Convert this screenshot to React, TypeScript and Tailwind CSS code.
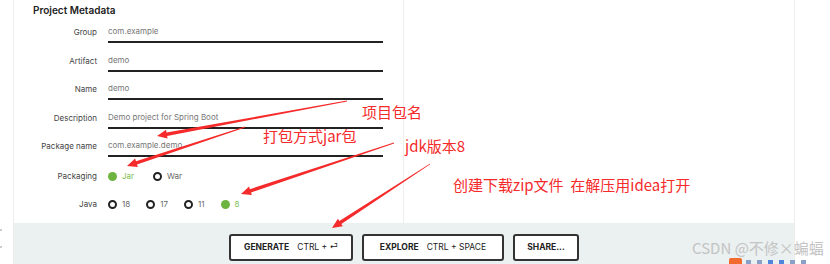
import React from "react";

const RED = "#f52a2a";

function arrowPoints(x1: number, y1: number, x2: number, y2: number) {
  const dx = x2 - x1;
  const dy = y2 - y1;
  const len = Math.sqrt(dx * dx + dy * dy);
  const ux = dx / len;
  const uy = dy / len;
  const nx = -uy;
  const ny = ux;
  const h = 10;
  const bx = x2 - ux * h;
  const by = y2 - uy * h;
  const p = (x: number, y: number, w: number) => `${(x + nx * w).toFixed(1)},${(y + ny * w).toFixed(1)}`;
  return [
    p(x1, y1, 0.4),
    p(bx, by, 1.7),
    p(bx, by, 4.5),
    `${x2},${y2}`,
    p(bx, by, -4.5),
    p(bx, by, -1.7),
    p(x1, y1, -0.4),
  ].join(" ");
}

const arrows = [
  [347, 101, 157, 136],
  [245, 127, 127, 166],
  [394, 143, 241, 194],
  [430, 164, 332, 228],
];

function Field({ label, value }: { label: string; value: string }) {
  return (
    <div className="flex items-end h-[28.5px]">
      <div className="w-[83px] text-right pb-[5px] text-[8px] leading-[12px] text-[#444]">{label}</div>
      <div className="ml-[11px] w-[275px] h-[18px] border-b-2 border-[#222] text-[8px] leading-[12px] text-[#777]">
        {value}
      </div>
    </div>
  );
}

function Radio({ label, checked }: { label: string; checked?: boolean }) {
  return (
    <div className="flex items-center gap-[5px]">
      {checked ? (
        <span className="w-[9px] h-[9px] rounded-full bg-[#6db33f]" />
      ) : (
        <span className="w-[9px] h-[9px] rounded-full border-2 border-[#222]" />
      )}
      <span className={`text-[8px] leading-[12px] ${checked ? "text-[#7cbd52]" : "text-[#666]"}`}>{label}</span>
    </div>
  );
}

function Btn({ main, keys, w }: { main: string; keys?: string; w: string }) {
  return (
    <div className={`${w} h-[27px] flex items-center justify-center gap-[8px] bg-white border-2 border-[#333] rounded-[3px] text-[8.5px] text-[#222]`}>
      <span className="font-bold">{main}</span>
      {keys && <span>{keys}</span>}
    </div>
  );
}

export default function App() {
  return (
    <div
      className="relative w-[830px] h-[264px] bg-white overflow-hidden"
      style={{ fontFamily: "Inter, 'Noto Sans', sans-serif" }}
    >
      <div className="flex h-full">
        <div className="w-[13px] shrink-0 relative">
          <span className="absolute left-0 top-[229px] w-[2px] h-[2px] bg-[#ccc]" />
          <span className="absolute left-0 top-[246px] w-[2px] h-[2px] bg-[#ccc]" />
        </div>
        <div className="w-[782px] shrink-0 flex flex-col border-l border-r border-[#eeeeee]">
          <div className="flex h-[223px]">
            <div className="w-[389px] pl-[19px]">
              <div className="h-[14.5px] pt-[4px] text-[10px] leading-[12px] font-semibold text-[#222]">Project Metadata</div>
              <div className="-ml-[19px]">
                <Field label="Group" value="com.example" />
                <Field label="Artifact" value="demo" />
                <Field label="Name" value="demo" />
                <Field label="Description" value="Demo project for Spring Boot" />
                <Field label="Package name" value="com.example.demo" />
                <div className="flex items-center h-[38px]">
                  <div className="w-[83px] text-right text-[8px] leading-[12px] text-[#444]">Packaging</div>
                  <div className="ml-[11px] flex gap-[19px]">
                    <Radio label="Jar" checked />
                    <Radio label="War" />
                  </div>
                </div>
                <div className="flex items-center h-[18px]">
                  <div className="w-[83px] text-right text-[8px] leading-[12px] text-[#444]">Java</div>
                  <div className="ml-[11px] flex gap-[16px]">
                    <Radio label="18" />
                    <Radio label="17" />
                    <Radio label="11" />
                    <Radio label="8" checked />
                  </div>
                </div>
              </div>
            </div>
            <div className="flex-1 border-l border-[#eeeeee]" />
          </div>
          <div className="h-[41px] bg-[#ebf0f0] flex justify-center pt-[11px] gap-[9px]">
            <Btn main="GENERATE" keys="CTRL + ⏎" w="w-[124px]" />
            <Btn main="EXPLORE" keys="CTRL + SPACE" w="w-[142px]" />
            <Btn main="SHARE..." w="w-[66px]" />
          </div>
        </div>
        <div className="flex-1" />
      </div>

      <svg className="absolute inset-0 pointer-events-none" width="830" height="264" viewBox="0 0 830 264">
        {arrows.map((a, i) => (
          <polygon key={i} points={arrowPoints(a[0], a[1], a[2], a[3])} fill={RED} />
        ))}
      </svg>

      <div
        className="absolute inset-0 pointer-events-none text-[15px] leading-[18px]"
        style={{ color: RED, fontFamily: "'Noto Sans CJK SC', 'Noto Sans', sans-serif" }}
      >
        <span className="absolute left-[362px] top-[103px]">项目包名</span>
        <span className="absolute left-[263px] top-[127px]">打包方式jar包</span>
        <span className="absolute left-[405px] top-[137px]">jdk版本8</span>
        <span className="absolute left-[453px] top-[176px] whitespace-pre">创建下载zip文件  在解压用idea打开</span>
      </div>

      <span
        className="absolute left-[692px] top-[239px] text-[15px] leading-[18px] text-[#c4c4c4]"
        style={{ fontFamily: "'Noto Sans CJK SC', 'Noto Sans', sans-serif" }}
      >
        CSDN @不修×蝙蝠
      </span>
      <span className="absolute left-[729px] top-[258px] w-[13px] h-[8px] rounded-[2px] bg-[#f26a2e]" />
      <span className="absolute left-[746px] top-[260px] w-[70px] h-[4px] flex gap-[6px]">
        <span className="w-[5px] h-[4px] bg-[#8aa0c8]" />
        <span className="w-[5px] h-[4px] bg-[#8aa0c8]" />
        <span className="w-[5px] h-[4px] bg-[#4f86dc]" />
        <span className="w-[5px] h-[4px] bg-[#4f86dc]" />
        <span className="w-[5px] h-[4px] bg-[#8aa0c8]" />
        <span className="w-[5px] h-[4px] bg-[#8aa0c8]" />
      </span>
    </div>
  );
}
